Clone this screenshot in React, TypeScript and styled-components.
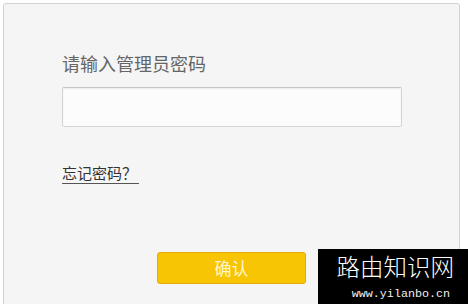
import styled, { createGlobalStyle } from "styled-components";

const Global = createGlobalStyle`
  html, body {
    margin: 0;
    padding: 0;
    background: #ffffff;
    font-family: "Noto Sans CJK SC", "Liberation Sans", sans-serif;
  }
`;

const Page = styled.div`
  position: relative;
  width: 468px;
  height: 304px;
  overflow: hidden;
  background: #ffffff;
`;

const Panel = styled.div`
  margin: 3px 0 0 3px;
  width: 457px;
  height: 320px;
  border: 1px solid #d2d2d2;
  border-radius: 3px;
  background: #f5f5f5;
  padding: 46px 0 0 58px;
  box-sizing: border-box;
  display: flex;
  flex-direction: column;
`;

const Label = styled.div`
  font-size: 18px;
  line-height: 26px;
  color: #666666;
  margin-bottom: 11px;
`;

const Input = styled.input`
  box-sizing: border-box;
  width: 340px;
  height: 40px;
  border: 1px solid #d4d4d4;
  border-top-color: #c4c4c4;
  border-radius: 2px;
  background: #fcfcfc;
  box-shadow: inset 0 1px 2px rgba(0, 0, 0, 0.07);
  outline: none;
  padding: 0 10px;
  font-size: 15px;
`;

const Forgot = styled.a`
  align-self: flex-start;
  margin-top: 36px;
  font-size: 15px;
  line-height: 20px;
  color: #333333;
  text-decoration: none;
  border-bottom: 1px solid #555555;
  padding-right: 2px;
  cursor: pointer;
`;

const Confirm = styled.button`
  align-self: flex-start;
  margin: 68px 0 0 95px;
  width: 149px;
  height: 32px;
  border: 1px solid #e3aa10;
  border-radius: 3px;
  background: #f8c504;
  color: #fff6d0;
  font-family: "Noto Sans CJK SC", sans-serif;
  font-size: 17px;
  line-height: 30px;
  padding: 0;
  cursor: pointer;
`;

const Watermark = styled.div`
  position: absolute;
  right: 0;
  bottom: 0;
  width: 150px;
  height: 55px;
  background: #000000;
  color: #ffffff;
  display: flex;
  flex-direction: column;
  align-items: flex-end;
  padding: 2px 14px 0 0;
  box-sizing: border-box;
`;

const MarkTitle = styled.div`
  font-family: "Noto Sans CJK SC", serif;
  font-weight: 300;
  font-size: 23.5px;
  line-height: 30px;
`;

const MarkUrl = styled.div`
  font-family: "Liberation Mono", monospace;
  font-size: 11.7px;
  line-height: 14px;
  margin: 6px 4px 0 0;
  color: #f0f0f0;
`;

export default function App() {
  return (
    <Page>
      <Global />
      <Panel>
        <Label>请输入管理员密码</Label>
        <Input type="password" />
        <Forgot>忘记密码？</Forgot>
        <Confirm>确认</Confirm>
      </Panel>
      <Watermark>
        <MarkTitle>路由知识网</MarkTitle>
        <MarkUrl>www.yilanbo.cn</MarkUrl>
      </Watermark>
    </Page>
  );
}
